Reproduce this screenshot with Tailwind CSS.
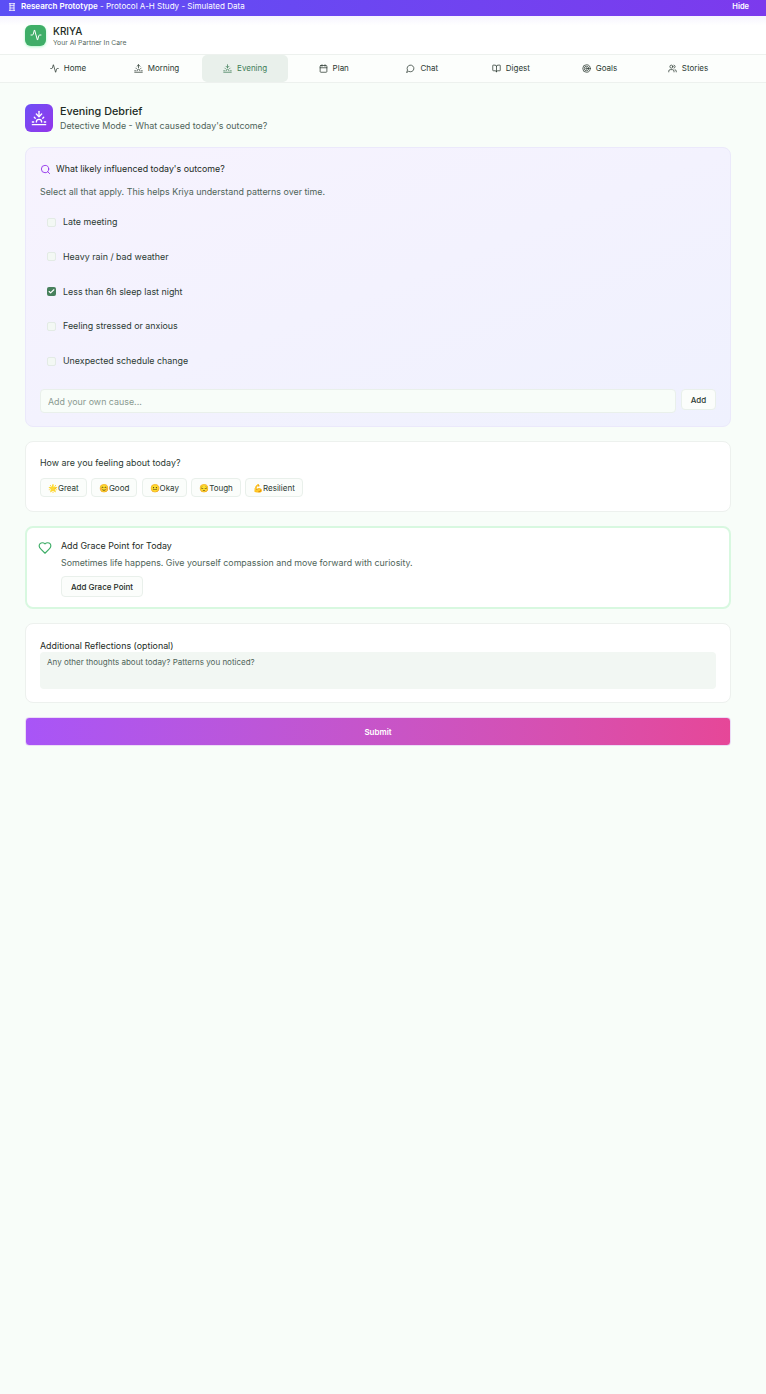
<!DOCTYPE html>
<html lang="en">
<head>
    <meta charset="UTF-8">
    <meta name="viewport" content="width=device-width, initial-scale=1.0">
    <title>Kriya - Evening Debrief</title>
    <script src="https://cdn.jsdelivr.net/npm/@tailwindcss/browser@4"></script>
</head>
<body class="bg-[#f8fdf9] min-h-screen font-[Inter,'Noto_Sans',sans-serif] text-[#1c2b24]">
    <!-- banner -->
    <div class="h-4 flex items-center justify-between pl-2 pr-[17px] pb-[3px] bg-gradient-to-r from-[#5b4ff5] to-[#7c3aed] text-white text-[8.05px]">
        <div class="flex items-center gap-[5px]">
            <svg class="w-2 h-2" viewBox="0 0 24 24" fill="none" stroke="currentColor" stroke-width="2.5" stroke-linecap="round" stroke-linejoin="round"><path d="M4 2h16"/><path d="M4 22h16"/><path d="M6 2v20"/><path d="M18 2v20"/><path d="M6 8h12"/><path d="M6 15h12"/></svg>
            <span><b class="font-semibold">Research Prototype</b> - Protocol A-H Study - Simulated Data</span>
        </div>
        <button class="font-semibold text-[7.5px]">Hide</button>
    </div>

    <!-- header -->
    <header class="h-[38px] bg-white flex items-center gap-[7px] px-[25px] bg-gradient-to-b from-[#f6f4fe] to-white to-[25%]">
        <div class="w-[21px] h-[21px] rounded-[6px] bg-[#3fae68] flex items-center justify-center shadow-sm shadow-green-200">
            <svg class="w-3 h-3 text-white" viewBox="0 0 24 24" fill="none" stroke="currentColor" stroke-width="2" stroke-linecap="round" stroke-linejoin="round"><path d="M22 12h-2.48a2 2 0 0 0-1.93 1.46l-2.35 8.36a.25.25 0 0 1-.48 0L9.24 2.18a.25.25 0 0 0-.48 0l-2.35 8.36A2 2 0 0 1 4.49 12H2"/></svg>
        </div>
        <div class="pt-[2px]">
            <div class="text-[10px] leading-[13px] font-medium">KRIYA</div>
            <div class="text-[6.8px] leading-[10px] text-[#55685e]">Your AI Partner In Care</div>
        </div>
    </header>

    <!-- tabs -->
    <nav class="h-[29px] bg-[#fcfefc] border-y border-[#edf1ee] pl-[25px] pr-[35px] grid grid-cols-8 gap-[2.6px] text-[8px] text-[#2b3a32]">
        <a class="flex items-center justify-center gap-[5px] pb-[1px]">
            <svg class="w-[9px] h-[9px]" viewBox="0 0 24 24" fill="none" stroke="currentColor" stroke-width="2" stroke-linecap="round" stroke-linejoin="round"><path d="M22 12h-2.48a2 2 0 0 0-1.93 1.46l-2.35 8.36a.25.25 0 0 1-.48 0L9.24 2.18a.25.25 0 0 0-.48 0l-2.35 8.36A2 2 0 0 1 4.49 12H2"/></svg>
            Home
        </a>
        <a class="flex items-center justify-center gap-[5px] pb-[1px]">
            <svg class="w-[9px] h-[9px]" viewBox="0 0 24 24" fill="none" stroke="currentColor" stroke-width="2" stroke-linecap="round" stroke-linejoin="round"><path d="M12 2v8"/><path d="m4.93 10.93 1.41 1.41"/><path d="M2 18h2"/><path d="M20 18h2"/><path d="m19.07 10.93-1.41 1.41"/><path d="M22 22H2"/><path d="m8 6 4-4 4 4"/><path d="M16 18a4 4 0 0 0-8 0"/></svg>
            Morning
        </a>
        <a class="flex items-center justify-center gap-[5px] pb-[1px] bg-[#e9f0eb] rounded-[5px] text-[#3f7d58]">
            <svg class="w-[9px] h-[9px]" viewBox="0 0 24 24" fill="none" stroke="currentColor" stroke-width="2" stroke-linecap="round" stroke-linejoin="round"><path d="M12 10V2"/><path d="m4.93 10.93 1.41 1.41"/><path d="M2 18h2"/><path d="M20 18h2"/><path d="m19.07 10.93-1.41 1.41"/><path d="M22 22H2"/><path d="m16 6-4 4-4-4"/><path d="M16 18a4 4 0 0 0-8 0"/></svg>
            Evening
        </a>
        <a class="flex items-center justify-center gap-[5px] pb-[1px]">
            <svg class="w-[9px] h-[9px]" viewBox="0 0 24 24" fill="none" stroke="currentColor" stroke-width="2" stroke-linecap="round" stroke-linejoin="round"><path d="M8 2v4"/><path d="M16 2v4"/><rect width="18" height="18" x="3" y="4" rx="2"/><path d="M3 10h18"/></svg>
            Plan
        </a>
        <a class="flex items-center justify-center gap-[5px] pb-[1px]">
            <svg class="w-[9px] h-[9px]" viewBox="0 0 24 24" fill="none" stroke="currentColor" stroke-width="2" stroke-linecap="round" stroke-linejoin="round"><path d="M7.9 20A9 9 0 1 0 4 16.1L2 22Z"/></svg>
            Chat
        </a>
        <a class="flex items-center justify-center gap-[5px] pb-[1px]">
            <svg class="w-[9px] h-[9px]" viewBox="0 0 24 24" fill="none" stroke="currentColor" stroke-width="2" stroke-linecap="round" stroke-linejoin="round"><path d="M12 7v14"/><path d="M3 18a1 1 0 0 1-1-1V4a1 1 0 0 1 1-1h5a4 4 0 0 1 4 4 4 4 0 0 1 4-4h5a1 1 0 0 1 1 1v13a1 1 0 0 1-1 1h-6a3 3 0 0 0-3 3 3 3 0 0 0-3-3z"/></svg>
            Digest
        </a>
        <a class="flex items-center justify-center gap-[5px] pb-[1px]">
            <svg class="w-[9px] h-[9px]" viewBox="0 0 24 24" fill="none" stroke="currentColor" stroke-width="2" stroke-linecap="round" stroke-linejoin="round"><circle cx="12" cy="12" r="10"/><circle cx="12" cy="12" r="6"/><circle cx="12" cy="12" r="2"/></svg>
            Goals
        </a>
        <a class="flex items-center justify-center gap-[5px] pb-[1px]">
            <svg class="w-[9px] h-[9px]" viewBox="0 0 24 24" fill="none" stroke="currentColor" stroke-width="2" stroke-linecap="round" stroke-linejoin="round"><path d="M16 21v-2a4 4 0 0 0-4-4H6a4 4 0 0 0-4 4v2"/><circle cx="9" cy="7" r="4"/><path d="M22 21v-2a4 4 0 0 0-3-3.87"/><path d="M16 3.13a4 4 0 0 1 0 7.75"/></svg>
            Stories
        </a>
    </nav>

    <main class="pl-[25px] pr-[35px] pt-[21px]">
        <!-- title -->
        <div class="flex items-center gap-[7px] h-7">
            <div class="w-7 h-7 rounded-[6px] bg-gradient-to-br from-[#6d4ff6] to-[#9333ea] flex items-center justify-center">
                <svg class="w-4 h-4 text-white" viewBox="0 0 24 24" fill="none" stroke="currentColor" stroke-width="2" stroke-linecap="round" stroke-linejoin="round"><path d="M12 10V2"/><path d="m4.93 10.93 1.41 1.41"/><path d="M2 18h2"/><path d="M20 18h2"/><path d="m19.07 10.93-1.41 1.41"/><path d="M22 22H2"/><path d="m16 6-4 4-4-4"/><path d="M16 18a4 4 0 0 0-8 0"/></svg>
            </div>
            <div>
                <h1 class="text-[10.8px] leading-[15px] font-medium">Evening Debrief</h1>
                <p class="text-[8.9px] leading-[13px] text-[#4f6459]">Detective Mode - What caused today's outcome?</p>
            </div>
        </div>

        <!-- causes -->
        <section class="mt-[15px] h-[280px] rounded-[8px] border border-[#ebe9fb] bg-gradient-to-br from-[#f7f3fe] to-[#eff1fe] px-[14px] pt-[15px]">
            <div class="flex items-center gap-[5px] h-3 text-[8.85px]">
                <svg class="w-[11px] h-[11px] text-[#9333ea]" viewBox="0 0 24 24" fill="none" stroke="currentColor" stroke-width="2" stroke-linecap="round" stroke-linejoin="round"><path d="m21 21-4.34-4.34"/><circle cx="11" cy="11" r="8"/></svg>
                What likely influenced today's outcome?
            </div>
            <p class="mt-[11px] text-[8.9px] leading-3 text-[#4f6459]">Select all that apply. This helps Kriya understand patterns over time.</p>
            <ul class="mt-[18px] flex flex-col gap-[22.8px] pl-[7px] text-[8.9px] leading-3 text-[#2b3a32]">
                <li class="flex items-center gap-[7px]"><span class="w-[9px] h-[9px] rounded-[2px] border border-[#e3ebe5] bg-[#f3f8f4]"></span>Late meeting</li>
                <li class="flex items-center gap-[7px]"><span class="w-[9px] h-[9px] rounded-[2px] border border-[#e3ebe5] bg-[#f3f8f4]"></span>Heavy rain / bad weather</li>
                <li class="flex items-center gap-[7px]"><span class="w-[9px] h-[9px] rounded-[2px] bg-[#47805c] flex items-center justify-center"><svg class="w-[7px] h-[7px] text-white" viewBox="0 0 24 24" fill="none" stroke="currentColor" stroke-width="4" stroke-linecap="round" stroke-linejoin="round"><path d="M20 6 9 17l-5-5"/></svg></span>Less than 6h sleep last night</li>
                <li class="flex items-center gap-[7px]"><span class="w-[9px] h-[9px] rounded-[2px] border border-[#e3ebe5] bg-[#f3f8f4]"></span>Feeling stressed or anxious</li>
                <li class="flex items-center gap-[7px]"><span class="w-[9px] h-[9px] rounded-[2px] border border-[#e3ebe5] bg-[#f3f8f4]"></span>Unexpected schedule change</li>
            </ul>
            <div class="mt-[22px] flex gap-[5px]">
                <input class="flex-1 h-6 px-[7px] rounded-[4px] border border-[#e9f0eb] bg-[#f8fdf9] text-[8.9px] placeholder:text-[#8a9a91]" placeholder="Add your own cause...">
                <button class="w-[35px] h-[21px] rounded-[4px] border border-[#e9f0eb] bg-[#fbfdfb] text-[8px] font-medium text-[#2b3a32]">Add</button>
            </div>
        </section>

        <!-- mood -->
        <section class="mt-[14px] h-[71px] rounded-[8px] border border-[#edf1ee] bg-white px-[14px] pt-[15px]">
            <div class="text-[8.9px] leading-3 text-[#2b3a32]">How are you feeling about today?</div>
            <div class="mt-[9px] flex gap-[4.2px] text-[8px] leading-[18px] text-[#2b3a32]">
                <button class="h-[19px] px-[7px] rounded-[4px] border border-[#e9f0eb] bg-[#fbfdfb]">🌟Great</button>
                <button class="h-[19px] px-[7px] rounded-[4px] border border-[#e9f0eb] bg-[#fbfdfb]">😊Good</button>
                <button class="h-[19px] px-[7px] rounded-[4px] border border-[#e9f0eb] bg-[#fbfdfb]">😐Okay</button>
                <button class="h-[19px] px-[7px] rounded-[4px] border border-[#e9f0eb] bg-[#fbfdfb]">😔Tough</button>
                <button class="h-[19px] px-[7px] rounded-[4px] border border-[#e9f0eb] bg-[#fbfdfb]">💪Resilient</button>
            </div>
        </section>

        <!-- grace point -->
        <section class="mt-[14px] h-[83px] rounded-[8px] border-2 border-[#d8f8e0] bg-white pl-[11px] pt-[12px] flex gap-[9px]">
            <svg class="w-[14px] h-[14px] mt-[1px] text-[#3fae68]" viewBox="0 0 24 24" fill="none" stroke="currentColor" stroke-width="2" stroke-linecap="round" stroke-linejoin="round"><path d="M19 14c1.49-1.46 3-3.21 3-5.5A5.5 5.5 0 0 0 16.5 3c-1.76 0-3 .5-4.5 2-1.5-1.5-2.74-2-4.5-2A5.5 5.5 0 0 0 2 8.5c0 2.3 1.5 4.05 3 5.5l7 7Z"/></svg>
            <div>
                <div class="text-[8.9px] leading-3">Add Grace Point for Today</div>
                <p class="mt-[5px] text-[8.83px] leading-3 text-[#4f6459]">Sometimes life happens. Give yourself compassion and move forward with curiosity.</p>
                <button class="mt-[7px] h-[21px] w-[82px] rounded-[4px] border border-[#e9f0eb] bg-[#fbfdfb] text-[8px] font-medium">Add Grace Point</button>
            </div>
        </section>

        <!-- reflections -->
        <section class="mt-[14px] h-20 rounded-[8px] border border-[#edf1ee] bg-white px-[14px] pt-[16px]">
            <div class="text-[8.9px] leading-3">Additional Reflections (optional)</div>
            <textarea class="block w-full h-[37px] px-[7px] py-[4px] rounded-[4px] bg-[#f2f7f3] text-[8px] leading-3 resize-none placeholder:text-[#4f6459]" placeholder="Any other thoughts about today? Patterns you noticed?"></textarea>
        </section>

        <button class="mt-[14px] w-full h-[29px] rounded-[4px] border border-[#ecdcf6] bg-gradient-to-r from-[#a855f7] to-[#e64798] text-white text-[8px] font-semibold">Submit</button>
    </main>
</body>
</html>
